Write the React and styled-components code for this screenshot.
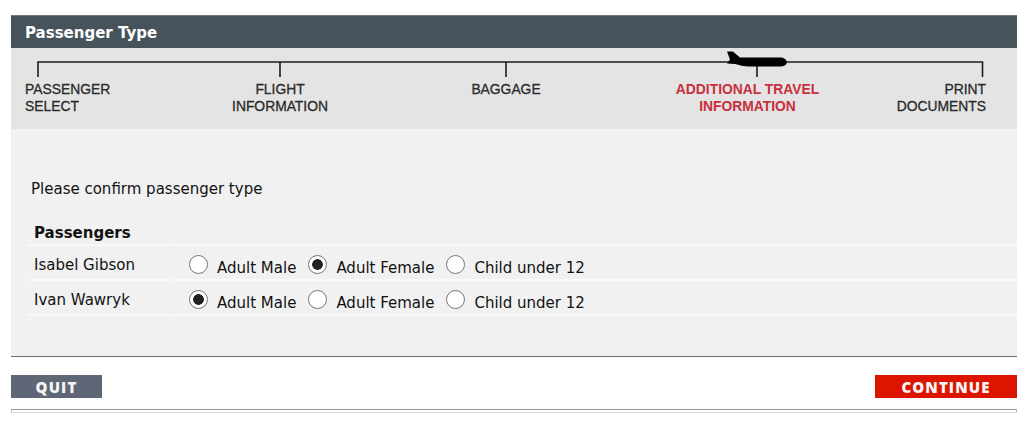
import styled, { createGlobalStyle } from "styled-components";

const GlobalStyle = createGlobalStyle`
  body {
    margin: 0;
    background: #fff;
    font-family: "DejaVu Sans", Verdana, sans-serif;
  }
`;

const steps = [
  { top: "PASSENGER", bottom: "SELECT", align: "left" },
  { top: "FLIGHT", bottom: "INFORMATION", align: "center" },
  { top: "BAGGAGE", align: "center" },
  { top: "ADDITIONAL TRAVEL", bottom: "INFORMATION", align: "center", current: true },
  { top: "PRINT", bottom: "DOCUMENTS", align: "right" },
];

const passengers = [
  { name: "Isabel Gibson", type: "Adult Female" },
  { name: "Ivan Wawryk", type: "Adult Male" },
];

const types = ["Adult Male", "Adult Female", "Child under 12"];

function Timeline() {
  return (
    <TimelineSvg width="1006" height="30" viewBox="0 0 1006 30">
      <path
        d="M27 29V14H971.5V29M269 14V29M495 14V29M746 14V29"
        fill="none"
        stroke="#1c1c1c"
        strokeWidth="1.6"
      />
      <path
        d="M716 3.5L722 3.5L729 9.5L769 9.5C773 9.5 775.5 11.5 776 14.5C775.5 17 773 18.5 769 18.5L738 18.5C733 18.5 728 17 724 16L716 15.5L719 11.5Z"
        fill="#000"
      />
    </TimelineSvg>
  );
}

export default function App() {
  return (
    <Page>
      <GlobalStyle />
      <Panel>
        <Heading>Passenger Type</Heading>
        <StepsBand>
          <Timeline />
          <StepLabels>
            {steps.map((step) => (
              <StepLabel key={step.top} $align={step.align} $current={step.current}>
                {step.top}
                {step.bottom && <br />}
                {step.bottom}
              </StepLabel>
            ))}
          </StepLabels>
        </StepsBand>
        <Body>
          <Intro>Please confirm passenger type</Intro>
          <Table>
            <thead>
              <tr>
                <HeadCell>Passengers</HeadCell>
                <EmptyHeadCell />
              </tr>
            </thead>
            <tbody>
              {passengers.map((passenger) => (
                <tr key={passenger.name}>
                  <NameCell>{passenger.name}</NameCell>
                  <OptionsCell>
                    <Options>
                      {types.map((type) => (
                        <Option key={type}>
                          <Radio
                            type="radio"
                            name={passenger.name}
                            defaultChecked={type === passenger.type}
                          />
                          <span>{type}</span>
                        </Option>
                      ))}
                    </Options>
                  </OptionsCell>
                </tr>
              ))}
            </tbody>
          </Table>
        </Body>
        <Actions>
          <Button $color="#5f6675">QUIT</Button>
          <Button $color="#dc1400" $wide>
            CONTINUE
          </Button>
        </Actions>
        <BottomRule />
      </Panel>
    </Page>
  );
}

const Page = styled.div`
  padding: 15px 0 0 11px;
`;

const Panel = styled.div`
  width: 1006px;
`;

const Heading = styled.h1`
  margin: 0;
  height: 33px;
  padding-left: 14px;
  background: #46535b;
  border-top: 1px solid #6b757b;
  box-sizing: border-box;
  color: #fff;
  font-size: 15px;
  font-weight: 700;
  line-height: 34px;
`;

const StepsBand = styled.div`
  height: 81px;
  background: #e4e4e4;
  box-sizing: border-box;
`;

const TimelineSvg = styled.svg`
  display: block;
`;

const StepLabels = styled.div`
  display: grid;
  grid-template-columns: 155px 200px 252px 231px 123px;
  margin: 3px 0 0 14px;
`;

const StepLabel = styled.div`
  color: ${(p) => (p.$current ? "#c8303c" : "#2a2a2a")};
  font-family: "Liberation Sans", Arial, sans-serif;
  font-size: 13.85px;
  font-weight: ${(p) => (p.$current ? 700 : 400)};
  -webkit-text-stroke: ${(p) => (p.$current ? "0" : "0.3px")};
  line-height: 17px;
  text-align: ${(p) => p.$align};
`;

const Body = styled.div`
  height: 228px;
  padding: 51px 0 0 14px;
  background: #f1f1f1;
  border-bottom: 1px solid #6e6e6e;
  box-sizing: border-box;
  color: #111;
  font-size: 15px;
`;

const Intro = styled.p`
  margin: 0 0 0 6px;
  line-height: 18px;
`;

const Table = styled.table`
  margin-top: 24px;
  width: 995px;
  border-collapse: separate;
  border-spacing: 3px 0;
`;

const HeadCell = styled.th`
  width: 144px;
  height: 24px;
  padding: 0 0 0 6px;
  border-bottom: 2px solid #f9f9f9;
  box-sizing: border-box;
  font-size: 15px;
  text-align: left;
`;

const EmptyHeadCell = styled.th`
  border-bottom: 2px solid #f9f9f9;
`;

const NameCell = styled.td`
  height: 35px;
  padding: 5px 0 0 6px;
  border-bottom: 2px solid #f9f9f9;
  box-sizing: border-box;
  font-size: 15px;
`;

const OptionsCell = styled.td`
  height: 35px;
  padding: 4px 0 0 14px;
  border-bottom: 2px solid #f9f9f9;
  box-sizing: border-box;
`;

const Options = styled.div`
  display: flex;
  gap: 12px;
`;

const Option = styled.label`
  display: flex;
  align-items: center;
  gap: 9px;
  font-size: 15px;

  span {
    padding-top: 7px;
  }
`;

const Radio = styled.input`
  appearance: none;
  width: 19px;
  height: 19px;
  margin: 0;
  background: #fff;
  border: 1px solid #767676;
  border-radius: 50%;
  box-sizing: border-box;

  &:checked {
    background: radial-gradient(circle, #222 0 5px, #fff 5.6px);
  }
`;

const Actions = styled.div`
  display: flex;
  justify-content: space-between;
  padding-top: 18px;
`;

const Button = styled.button`
  width: ${(p) => (p.$wide ? "142px" : "91px")};
  height: 23px;
  padding: 0;
  background: ${(p) => p.$color};
  border: none;
  color: #f4f4f4;
  font-family: "Open Sans", sans-serif;
  font-size: 15px;
  font-weight: 800;
  letter-spacing: 1.1px;
`;

const BottomRule = styled.div`
  height: 2px;
  margin-top: 11px;
  background: #fff;
  border-top: 1px solid #999;
  border-bottom: 1px solid #ddd;
  border-left: 1px solid #bbb;
  border-right: 1px solid #bbb;
`;
